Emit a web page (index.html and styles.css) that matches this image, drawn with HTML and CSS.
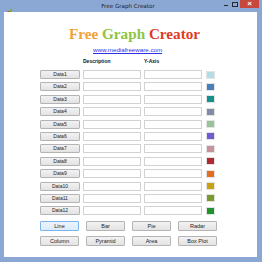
FILE: index.html
```html
<!DOCTYPE html>
<html lang="en">
<head>
    <meta charset="UTF-8">
    <link rel="stylesheet" href="styles.css">
    <title>Free Graph Creator</title>
</head>
<body>
    <div class="window">
        <div class="titlebar">
            <div class="app-icon">
                <svg width="7" height="8" viewBox="0 0 7 8">
                    <rect x="0" y="5" width="2" height="3" fill="#e8a020"/>
                    <rect x="2.5" y="3" width="2" height="5" fill="#d04020"/>
                    <rect x="5" y="1" width="2" height="7" fill="#80b030"/>
                </svg>
            </div>
            <div class="title">Free Graph Creator</div>
            <div class="controls">
                <span class="ctl min"></span>
                <span class="ctl max"></span>
                <span class="ctl close">×</span>
            </div>
        </div>

        <div class="client">
            <h1 class="logo"><span class="w-free">Free</span> <span class="w-graph">Graph</span> <span class="w-creator">Creator</span></h1>
            <a class="site" href="#">www.mediafreeware.com</a>

            <div class="grid">
                <div class="head-row">
                    <span></span>
                    <span class="col-head">Description</span>
                    <span class="col-head">Y-Axis</span>
                </div>
                <div id="rows"></div>
            </div>

            <div class="chart-buttons">
                <button class="chart-btn default">Line</button>
                <button class="chart-btn">Bar</button>
                <button class="chart-btn">Pie</button>
                <button class="chart-btn">Radar</button>
                <button class="chart-btn">Column</button>
                <button class="chart-btn">Pyramid</button>
                <button class="chart-btn">Area</button>
                <button class="chart-btn">Box Plot</button>
            </div>
        </div>
    </div>

    <script>
        const colors = ['#b2dde2', '#4a7fb9', '#14918c', '#7f8ea4', '#98c39a', '#6b5fcf',
                        '#c7939b', '#b02a35', '#e06f22', '#c9a012', '#7a9a2e', '#22922f'];

        const rows = document.getElementById('rows');
        colors.forEach((c, i) => {
            const row = document.createElement('div');
            row.className = 'data-row';
            row.innerHTML = `<button class="data-btn">Data${i + 1}</button>
                <input class="field" type="text">
                <input class="field" type="text">
                <span class="swatch" style="background:${c}"></span>`;
            rows.appendChild(row);
        });
    </script>
</body>
</html>
```

FILE: styles.css
```css
body {
    margin: 0;
    font-family: "Liberation Sans", Arial, sans-serif;
}

.window {
    width: 262px;
    height: 262px;
    background-color: #8ba7d3;
    display: flex;
    flex-direction: column;
    box-sizing: border-box;
}

.titlebar {
    height: 12px;
    display: flex;
    align-items: flex-start;
}

.app-icon {
    width: 8px;
    margin: 2px 0 0 5px;
}

.title {
    flex: 1;
    text-align: center;
    font-family: "DejaVu Sans", sans-serif;
    font-size: 5.6px;
    line-height: 12px;
    color: #1e1e1e;
    padding-left: 22px;
}

.controls {
    display: flex;
    align-items: flex-start;
    margin-right: 3px;
}

.ctl {
    width: 9px;
    height: 8px;
    display: flex;
    align-items: center;
    justify-content: center;
}

.min::after {
    content: "";
    width: 4px;
    height: 1px;
    margin-top: 2px;
    background: #2a2a2a;
}

.max::after {
    content: "";
    width: 4px;
    height: 3px;
    border: 1px solid #2a2a2a;
}

.close {
    width: 19px;
    margin-left: 1px;
    background-color: #c7493d;
    color: #fff;
    font-size: 8px;
    font-weight: bold;
    line-height: 8px;
}

.client {
    flex: 1;
    background: #fff;
    margin: 0 5px 5px 4px;
    display: flex;
    flex-direction: column;
    align-items: flex-start;
}

.logo {
    margin: 14px 0 0 65px;
    font-family: "Liberation Serif", serif;
    font-weight: bold;
    font-size: 15.2px;
    line-height: 16px;
}

.w-free { color: #f1a234; }
.w-graph { color: #8ec43f; }
.w-creator { color: #df3b1f; }

.site {
    margin: 4px 0 0 89px;
    font-size: 6.2px;
    color: #3030e8;
    line-height: 8px;
}

.grid {
    margin: 2px 0 0 36px;
}

.head-row,
.data-row {
    display: grid;
    grid-template-columns: 40px 58px 58px 10px;
    column-gap: 3px;
    align-items: center;
}

.head-row {
    height: 10px;
}

.col-head {
    font-size: 5px;
    font-weight: bold;
    color: #111;
}

#rows {
    display: flex;
    flex-direction: column;
    gap: 3.4px;
    margin-top: 4px;
}

.data-row {
    height: 9px;
}

.data-btn,
.chart-btn {
    font-family: "Liberation Sans", Arial, sans-serif;
    padding: 0;
    color: #222;
    border: 1px solid #b4b4b4;
    background: linear-gradient(#f2f2f2, #e3e3e3);
    border-radius: 1px;
}

.data-btn {
    height: 9px;
    font-size: 5px;
    line-height: 7px;
}

.field {
    height: 9px;
    box-sizing: border-box;
    border: 1px solid #d2d2d2;
    padding: 0;
    margin: 0;
    background: #fff;
}

.swatch {
    width: 9px;
    height: 8px;
    margin-left: 1px;
    border: 1px solid #e4e4e4;
    box-sizing: border-box;
}

.chart-buttons {
    margin: 6px 0 0 36px;
    display: grid;
    grid-template-columns: repeat(4, 39px);
    column-gap: 7px;
    row-gap: 5px;
}

.chart-btn {
    height: 10px;
    font-size: 5.5px;
}

.chart-btn.default {
    border-color: #7eb4ea;
    background: linear-gradient(#eaf3fc, #dcecfc);
}
```
